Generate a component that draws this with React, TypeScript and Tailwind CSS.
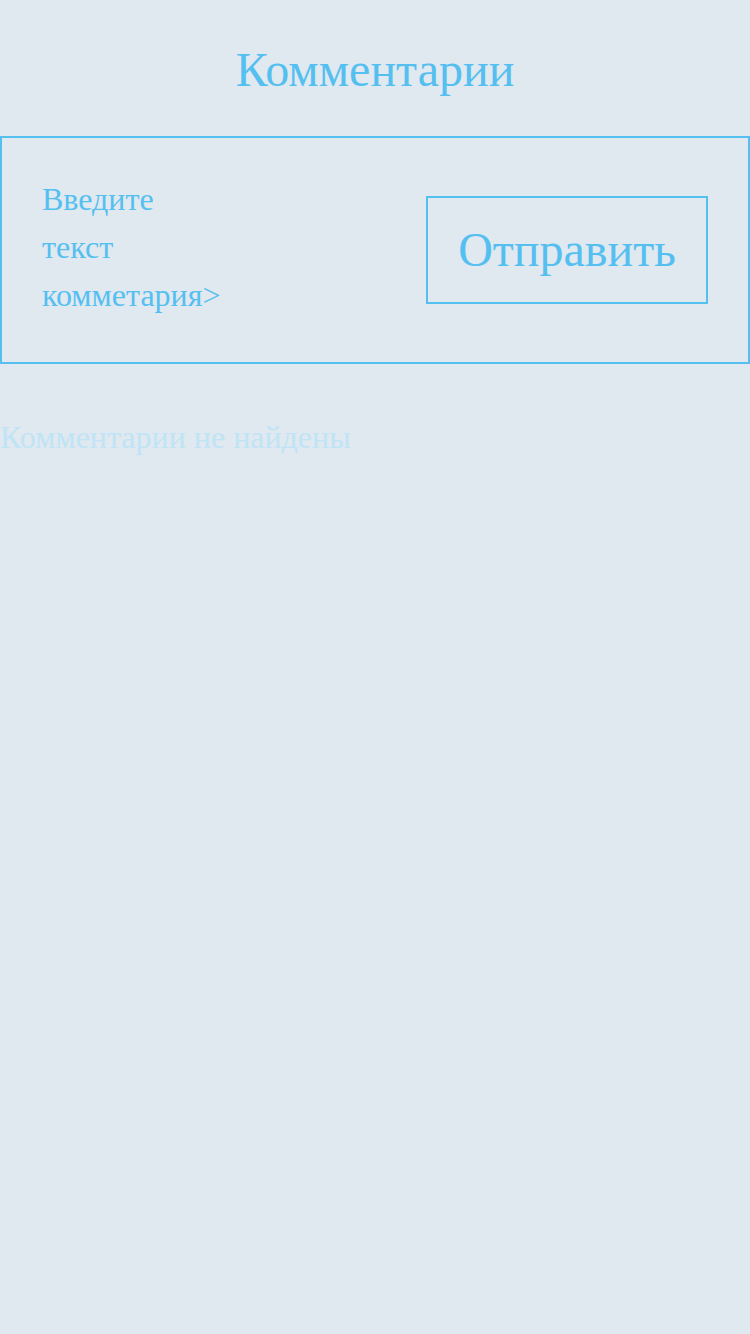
export default function App() {
  return (
    <div className="min-h-[1334px] w-[750px] bg-[#e0e8f0] font-['Liberation_Serif','Times_New_Roman',serif] text-[#55c0f0]">
      {/* Title */}
      <h1 className="pt-[42px] pb-[39px] text-center text-[48px] leading-[55px]">Комментарии</h1>

      {/* Comment form */}
      <div className="flex items-center justify-between border-2 border-[#55c0f0] px-[40px] pt-[37px] pb-[43px]">
        <div className="w-[185px] text-[32px] leading-[48px]">Введите текст комметария&gt;</div>
        <button className="mt-[5px] border-2 border-[#55c0f0] px-[30px] pt-[24px] pb-[25px] text-[48px] leading-[55px]">
          Отправить
        </button>
      </div>

      {/* Empty state */}
      <p className="mt-[49px] text-[32px] leading-[48px] text-[#bfe4f5]">Комментарии не найдены</p>
    </div>
  );
}
